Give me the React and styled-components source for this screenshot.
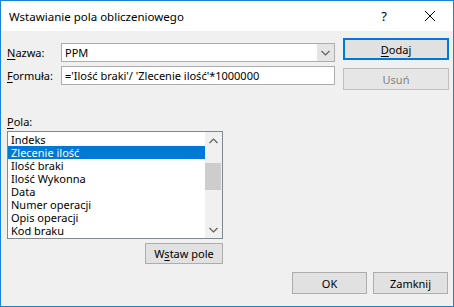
import React from 'react';
import styled, { createGlobalStyle } from 'styled-components';

const GlobalStyle = createGlobalStyle`
  html, body {
    margin: 0;
    padding: 0;
    background: #ffffff;
  }
  body {
    font-family: "Noto Sans", "Open Sans", sans-serif;
    font-size: 11px;
    color: #000000;
  }
`;

const Window = styled.div`
  width: 454px;
  height: 307px;
  box-sizing: border-box;
  border: 1px solid #1883d7;
  background: #f0f0f0;
  display: flex;
  flex-direction: column;
`;

const TitleBar = styled.div`
  height: 30px;
  background: #ffffff;
  display: flex;
  align-items: center;
  padding-left: 8px;
`;

const Title = styled.div`
  flex: 1;
  font-size: 11.5px;
`;

const TitleButton = styled.div`
  width: 46px;
  height: 30px;
  display: flex;
  align-items: center;
  justify-content: center;
  font-size: 13px;
`;

const Body = styled.div`
  flex: 1;
  display: flex;
  flex-direction: column;
  padding: 7px 4px 0 6px;
`;

const TopSection = styled.div`
  display: flex;
  justify-content: space-between;
`;

const Fields = styled.div`
  display: flex;
  flex-direction: column;
  gap: 4px;
  padding-top: 5px;
`;

const FieldRow = styled.div`
  display: flex;
  align-items: center;
`;

const Label = styled.label`
  width: 54px;
  line-height: 16px;
`;

const TextBox = styled.div`
  width: 274px;
  height: 19px;
  box-sizing: border-box;
  border: 1px solid #adadad;
  background: #ffffff;
  display: flex;
  align-items: center;
  padding-left: 3px;
  white-space: nowrap;
  overflow: hidden;
`;

const ComboText = styled.div`
  flex: 1;
`;

const DropButton = styled.div`
  width: 17px;
  height: 17px;
  background: #e5e5e5;
  display: flex;
  align-items: center;
  justify-content: center;
`;

const SideButtons = styled.div`
  display: flex;
  flex-direction: column;
  gap: 8px;
`;

const Button = styled.div`
  width: ${p => p.$w || 75}px;
  height: ${p => p.$h || 22}px;
  box-sizing: border-box;
  border: ${p => (p.$primary ? '2px solid #0078d7' : '1px solid #adadad')};
  border-color: ${p => (p.$disabled ? '#bfbfbf' : undefined)};
  background: ${p => (p.$disabled ? '#e6e6e6' : '#e1e1e1')};
  color: ${p => (p.$disabled ? '#838383' : '#000000')};
  display: flex;
  align-items: center;
  justify-content: center;
`;

const PolaLabel = styled.div`
  margin-top: 24px;
  line-height: 15px;
`;

const ListColumn = styled.div`
  width: 216px;
  margin-top: 2px;
  display: flex;
  flex-direction: column;
  align-items: flex-end;
`;

const ListBox = styled.div`
  width: 216px;
  height: 108px;
  box-sizing: border-box;
  border: 1px solid #828790;
  background: #ffffff;
  display: flex;
`;

const Items = styled.div`
  flex: 1;
  padding-top: 1px;
`;

const Item = styled.div`
  height: 13px;
  line-height: 13px;
  padding-left: 3px;
  white-space: nowrap;
  background: ${p => (p.$selected ? '#0078d7' : 'transparent')};
  color: ${p => (p.$selected ? '#ffffff' : '#000000')};
`;

const ScrollBar = styled.div`
  width: 17px;
  background: #f0f0f0;
  display: flex;
  flex-direction: column;
`;

const ScrollArrow = styled.div`
  height: 17px;
  display: flex;
  align-items: center;
  justify-content: center;
`;

const ScrollTrack = styled.div`
  flex: 1;
`;

const Thumb = styled.div`
  margin: 14px 1px 0 0;
  height: 27px;
  background: #cdcdcd;
`;

const InsertButton = styled(Button)`
  margin-top: 4px;
`;

const Footer = styled.div`
  margin-top: 8px;
  padding-right: 1px;
  display: flex;
  justify-content: flex-end;
  gap: 6px;
`;

const Key = styled.span`
  text-decoration: underline;
  text-underline-offset: 2px;
`;

const Chevron = ({ up }) => (
  <svg width="9" height="6" viewBox="0 0 9 6">
    <polyline
      points={up ? '0.5,5 4.5,1 8.5,5' : '0.5,1 4.5,5 8.5,1'}
      fill="none"
      stroke="#606060"
      strokeWidth="1.2"
    />
  </svg>
);

const items = [
  'Indeks',
  'Zlecenie ilość',
  'Ilość braki',
  'Ilość Wykonna',
  'Data',
  'Numer operacji',
  'Opis operacji',
  'Kod braku'
];

export default function App() {
  return (
    <>
      <GlobalStyle />
      <Window>
        <TitleBar>
          <Title>Wstawianie pola obliczeniowego</Title>
          <TitleButton>?</TitleButton>
          <TitleButton>
            <svg width="10" height="10" viewBox="0 0 10 10">
              <path d="M0 0L10 10M10 0L0 10" stroke="#000" strokeWidth="1" />
            </svg>
          </TitleButton>
        </TitleBar>
        <Body>
          <TopSection>
            <Fields>
              <FieldRow>
                <Label><Key>N</Key>azwa:</Label>
                <TextBox>
                  <ComboText>PPM</ComboText>
                  <DropButton><Chevron /></DropButton>
                </TextBox>
              </FieldRow>
              <FieldRow>
                <Label><Key>F</Key>ormuła:</Label>
                <TextBox>='Ilość braki'/ 'Zlecenie ilość'*1000000</TextBox>
              </FieldRow>
            </Fields>
            <SideButtons>
              <Button $w={106} $primary><span><Key>D</Key>odaj</span></Button>
              <Button $w={106} $disabled>Usuń</Button>
            </SideButtons>
          </TopSection>
          <PolaLabel><Key>P</Key>ola:</PolaLabel>
          <ListColumn>
            <ListBox>
              <Items>
                {items.map((name, i) => (
                  <Item key={name} $selected={i === 1}>{name}</Item>
                ))}
              </Items>
              <ScrollBar>
                <ScrollArrow><Chevron up /></ScrollArrow>
                <ScrollTrack><Thumb /></ScrollTrack>
                <ScrollArrow><Chevron /></ScrollArrow>
              </ScrollBar>
            </ListBox>
            <InsertButton $w={78} $h={21}><span>W<Key>s</Key>taw pole</span></InsertButton>
          </ListColumn>
          <Footer>
            <Button>OK</Button>
            <Button>Zamknij</Button>
          </Footer>
        </Body>
      </Window>
    </>
  );
}
